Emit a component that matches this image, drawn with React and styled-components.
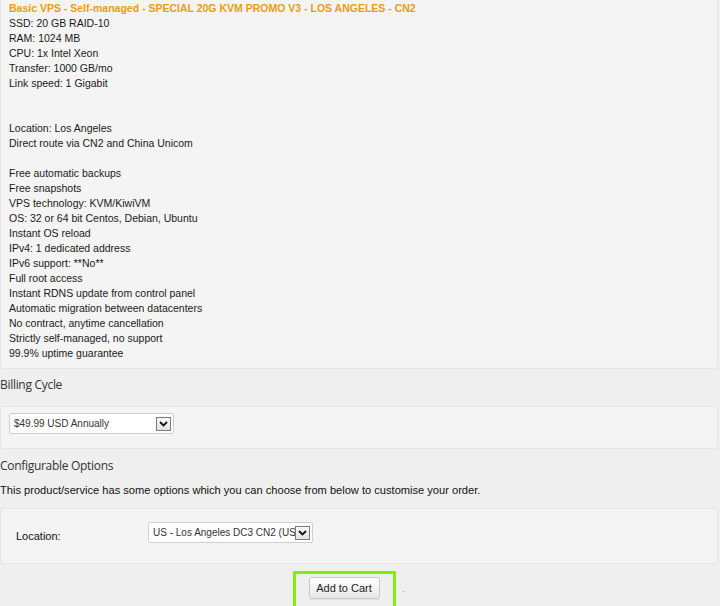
import React from "react";
import styled, { createGlobalStyle } from "styled-components";

const Global = createGlobalStyle`
  html, body { margin: 0; padding: 0; }
  body {
    background: #efefef;
    font-family: "Liberation Sans", Arial, sans-serif;
    font-size: 11px;
    color: #222;
    overflow: hidden;
  }
`;

const Page = styled.div`
  width: 720px;
  height: 606px;
  overflow: hidden;
  padding-right: 2px;
  box-sizing: border-box;
`;

const Panel = styled.div`
  background: #f4f4f4;
  border: 1px solid #e4e4e4;
  border-radius: 3px;
  box-sizing: border-box;
`;

const InfoPanel = styled(Panel)`
  margin-top: -4px;
  padding: 4px 8px 7px 8px;
  line-height: 15px;
  font-size: 10.5px;
  color: #1a1a1a;
`;

const Title = styled.div`
  color: #e99d12;
  font-weight: bold;
`;

const Line = styled.div`
  min-height: 15px;
`;

const Heading = styled.div`
  font-family: "Open Sans", "Noto Sans", sans-serif;
  font-size: 12px;
  line-height: 18px;
  color: #333;
  margin: ${(p) => p.$margin};
  letter-spacing: -0.3px;
`;

const Description = styled.div`
  line-height: 15px;
  font-size: 11.1px;
  margin: 8px 0 10px 0;
  color: #111;
`;

const BillingPanel = styled(Panel)`
  padding: 6px 8px 14px 8px;
`;

const SelectBox = styled.div`
  width: ${(p) => p.$width}px;
  height: 21px;
  box-sizing: border-box;
  background: #fff;
  border: 1px solid #d0d0d0;
  border-radius: 2px;
  display: flex;
  align-items: center;
  padding: 0 2px 0 4px;
  font-size: 10px;
  color: #333;
  overflow: hidden;
`;

const SelectText = styled.span`
  flex: 1;
  white-space: nowrap;
  overflow: hidden;
`;

const ArrowBox = styled.span`
  width: 15px;
  height: 14px;
  box-sizing: border-box;
  border: 1px solid #7a7a7a;
  background: linear-gradient(#fafafa, #e2e2e2);
  display: flex;
  align-items: center;
  justify-content: center;
  flex: none;
`;

const LocationPanel = styled(Panel)`
  padding: 13px 0 20px 15px;
`;

const OptionRow = styled.div`
  display: flex;
  align-items: center;
`;

const OptionLabel = styled.div`
  width: 132px;
  padding-top: 7px;
  color: #111;
`;

const ButtonRow = styled.div`
  display: flex;
  justify-content: center;
  padding-right: 30px;
  margin-top: 7px;
`;

const Highlight = styled.div`
  position: relative;
  border: 3px solid #7ef000;
  padding: 3px 13px 8px 13px;
  display: flex;
`;

const CartButton = styled.button`
  width: 71px;
  height: 22px;
  border: 1px solid #c8c8c8;
  border-radius: 3px;
  background: linear-gradient(#ffffff, #e8e8e8);
  font-family: "Liberation Sans", Arial, sans-serif;
  font-size: 11px;
  color: #222;
  padding: 0;
  box-shadow: 0 1px 1px rgba(0, 0, 0, 0.06);
`;

const Dot = styled.span`
  position: absolute;
  left: calc(100% + 10px);
  top: 17px;
  width: 1px;
  height: 1px;
  background: #9a9a9a;
`;

const Chevron = () => (
  <svg width="9" height="6" viewBox="0 0 9 6">
    <path d="M1 1 L4.5 4.5 L8 1" fill="none" stroke="#111" strokeWidth="1.8" />
  </svg>
);

const Select = ({ width, children }) => (
  <SelectBox $width={width}>
    <SelectText>{children}</SelectText>
    <ArrowBox>
      <Chevron />
    </ArrowBox>
  </SelectBox>
);

const lines = [
  "SSD: 20 GB RAID-10",
  "RAM: 1024 MB",
  "CPU: 1x Intel Xeon",
  "Transfer: 1000 GB/mo",
  "Link speed: 1 Gigabit",
  "",
  "",
  "Location: Los Angeles",
  "Direct route via CN2 and China Unicom",
  "",
  "Free automatic backups",
  "Free snapshots",
  "VPS technology: KVM/KiwiVM",
  "OS: 32 or 64 bit Centos, Debian, Ubuntu",
  "Instant OS reload",
  "IPv4: 1 dedicated address",
  "IPv6 support: **No**",
  "Full root access",
  "Instant RDNS update from control panel",
  "Automatic migration between datacenters",
  "No contract, anytime cancellation",
  "Strictly self-managed, no support",
  "99.9% uptime guarantee",
];

export default function App() {
  return (
    <Page>
      <Global />
      <InfoPanel>
        <Title>Basic VPS - Self-managed - SPECIAL 20G KVM PROMO V3 - LOS ANGELES - CN2</Title>
        {lines.map((l, i) => (
          <Line key={i}>{l}</Line>
        ))}
      </InfoPanel>
      <Heading $margin="7px 0 12px 0">Billing Cycle</Heading>
      <BillingPanel>
        <Select width={165}>$49.99 USD Annually</Select>
      </BillingPanel>
      <Heading $margin="8px 0 0 0">Configurable Options</Heading>
      <Description>
        This product/service has some options which you can choose from below to customise your order.
      </Description>
      <LocationPanel>
        <OptionRow>
          <OptionLabel>Location:</OptionLabel>
          <Select width={165}>US - Los Angeles DC3 CN2 (US</Select>
        </OptionRow>
      </LocationPanel>
      <ButtonRow>
        <Highlight>
          <CartButton>Add to Cart</CartButton>
          <Dot />
        </Highlight>
      </ButtonRow>
    </Page>
  );
}
